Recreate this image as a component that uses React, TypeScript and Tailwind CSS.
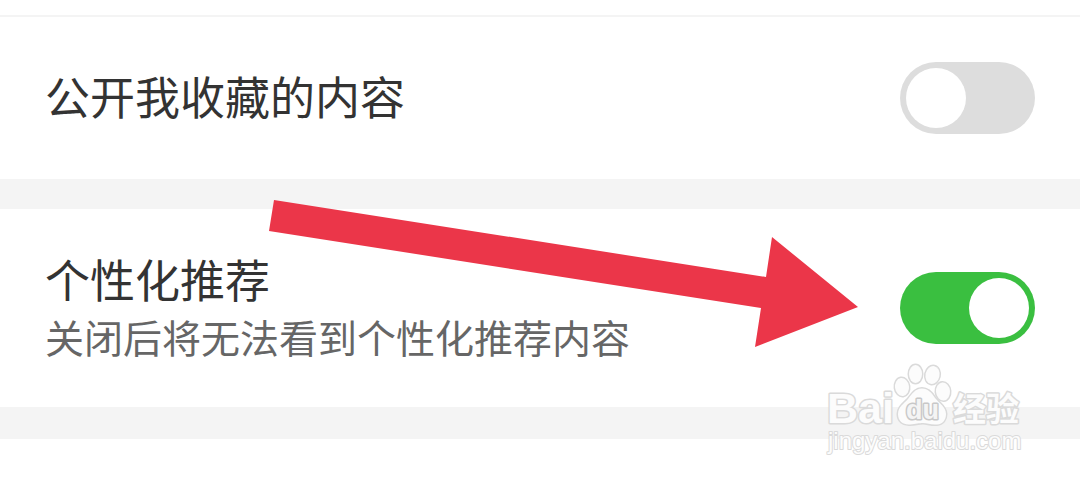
import { useState } from 'react';

type SettingProps = {
  id: string;
  title: string;
  description?: string;
  defaultOn?: boolean;
};

function Setting({ id, title, description, defaultOn = false }: SettingProps) {
  const [on, setOn] = useState(defaultOn);
  return (
    <div className="flex items-center justify-between bg-white px-[45px] py-10">
      <div className="flex flex-col pb-1">
        <label htmlFor={id} className="py-[9px] text-[45px] leading-[60px] text-[#333333] has-[+p]:py-0">
          {title}
        </label>
        {description && (
          <p id={`${id}-description`} className="text-[39px] leading-[54px] text-[#666666]">
            {description}
          </p>
        )}
      </div>
      <input
        id={id}
        type="checkbox"
        role="switch"
        checked={on}
        aria-describedby={description ? `${id}-description` : undefined}
        onChange={(event) => setOn(event.target.checked)}
        className="flex h-[72px] w-[135px] shrink-0 cursor-pointer appearance-none items-center rounded-full bg-[#dddddd] px-[6px] before:block before:size-[60px] before:rounded-full before:bg-white before:content-[''] checked:justify-end checked:bg-[#3abf40]"
      />
    </div>
  );
}

function Arrow() {
  return (
    <svg
      className="pointer-events-none absolute top-[200px] right-[222px]"
      width="589"
      height="147"
      viewBox="0 0 589 147"
      aria-hidden="true"
    >
      <path d="M5 0 497 77 503 37 589 107 486 147 492 108 0 31Z" fill="#eb3649" />
    </svg>
  );
}

function Watermark() {
  return (
    <svg
      className="pointer-events-none absolute top-[360px] right-[54px] font-['Liberation_Sans','Noto_Sans_CJK_SC',sans-serif]"
      width="206"
      height="100"
      viewBox="0 0 206 100"
      fill="#fcfcfc"
      stroke="#dadada"
      strokeWidth="3"
      strokeLinejoin="round"
      paintOrder="stroke"
    >
      <text x="7" y="63" fontSize="43" fontWeight="700">Bai</text>
      <g strokeWidth="3">
        <ellipse cx="82" cy="27" rx="7" ry="9" transform="rotate(-8 82 27)" />
        <ellipse cx="95.500" cy="14" rx="6.500" ry="9" />
        <ellipse cx="112.500" cy="15" rx="7" ry="9" transform="rotate(12 112.500 15)" />
        <ellipse cx="123" cy="31.500" rx="7" ry="9" transform="rotate(-5 123 31.500)" />
        <path d="M102 28.500C95 28.500 92 34 88 39C84 43.500 78 47 78 54C78 61 83 65 90 64.500C96 64 99 63 103 63C107 63 111 65 117 64.500C123 64 126 59.500 126 54C126 47 119 43 115 38C112 33 108 28.500 102 28.500Z" />
      </g>
      <text x="86" y="59" fontSize="27" fontWeight="700" fill="#f4f4f4" stroke="#c8c8c8">du</text>
      <text x="133" y="61" fontSize="33" fontWeight="700">经验</text>
      <text x="8" y="89" fontSize="24" strokeWidth="2">jingyan.baidu.com</text>
    </svg>
  );
}

export default function App() {
  return (
    <main className="relative min-h-screen overflow-hidden bg-white font-['Noto_Sans_CJK_SC',sans-serif]">
      <div className="h-[17px] border-b-2 border-[#f4f4f4]" />
      <Setting id="public-favorites" title="公开我收藏的内容" />
      <div className="h-[30px] bg-[#f4f4f4]" />
      <Setting
        id="personalized"
        title="个性化推荐"
        description="关闭后将无法看到个性化推荐内容"
        defaultOn
      />
      <div className="h-8 bg-[#f4f4f4]" />
      <Arrow />
      <Watermark />
    </main>
  );
}
